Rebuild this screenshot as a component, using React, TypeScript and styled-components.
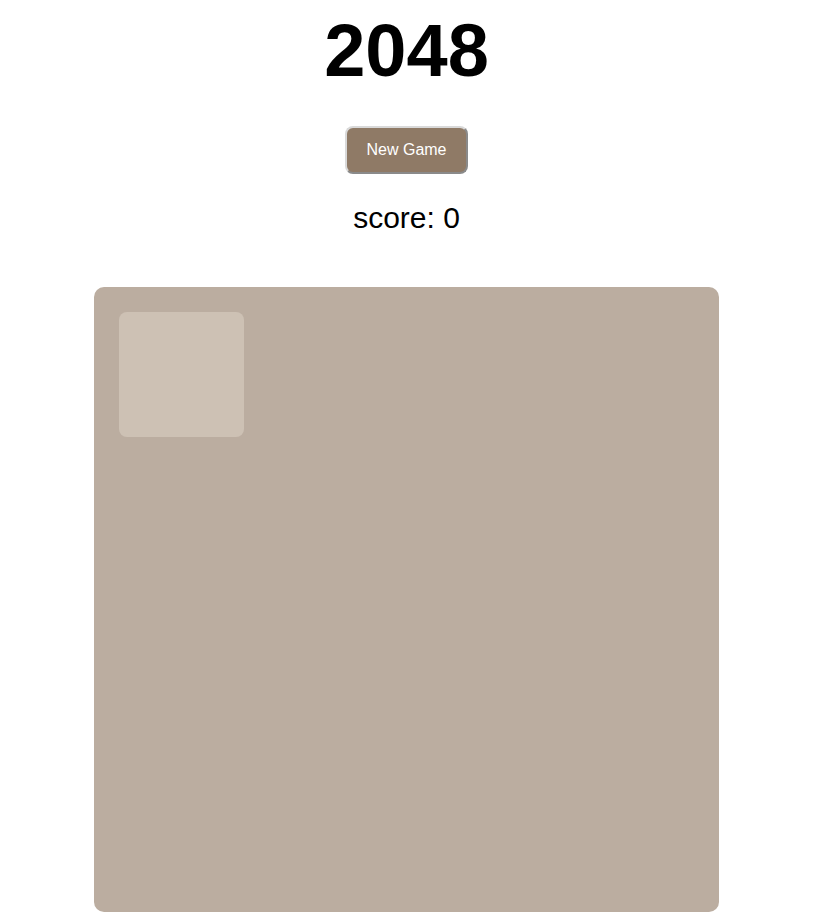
import React from "react";
import styled, { createGlobalStyle } from "styled-components";

const Global = createGlobalStyle`
  html, body { margin: 0; padding: 0; background: #fff; }
  body { font-family: "Liberation Sans", Arial, sans-serif; }
`;

const Page = styled.div`
  display: flex;
  flex-direction: column;
  align-items: center;
  padding-top: 8px;
  padding-right: 4px;
`;

const Title = styled.h1`
  margin: 0;
  font-size: 74px;
  font-weight: bold;
  line-height: 86px;
  color: #000;
`;

const NewGameButton = styled.button`
  margin-top: 32px;
  font-family: "Liberation Sans", Arial, sans-serif;
  font-size: 16px;
  color: #fff;
  background: #8f7a66;
  border-style: solid;
  border-width: 2px;
  border-color: #d9d9d9 #8a8a8a #8a8a8a #d9d9d9;
  border-radius: 8px;
  padding: 13px 19px;
  cursor: pointer;
`;

const Score = styled.div`
  margin-top: 26px;
  font-size: 30px;
  line-height: 36px;
  color: #000;
`;

const Board = styled.div`
  margin-top: 51px;
  width: 625px;
  height: 625px;
  box-sizing: border-box;
  padding: 25px;
  background: #bbada0;
  border-radius: 10px;
  display: grid;
  grid-template-columns: repeat(4, 125px);
  grid-template-rows: repeat(4, 125px);
  gap: 25px;
`;

const Cell = styled.div<{ $visible?: boolean }>`
  border-radius: 8px;
  background: ${(p) => (p.$visible ? "#cdc1b4" : "transparent")};
`;

export default function App() {
  const cells = Array.from({ length: 16 }, (_, i) => i);
  return (
    <>
      <Global />
      <Page>
        <Title>2048</Title>
        <NewGameButton>New Game</NewGameButton>
        <Score>score: 0</Score>
        <Board>
          {cells.map((i) => (
            <Cell key={i} $visible={i === 0} />
          ))}
        </Board>
      </Page>
    </>
  );
}
